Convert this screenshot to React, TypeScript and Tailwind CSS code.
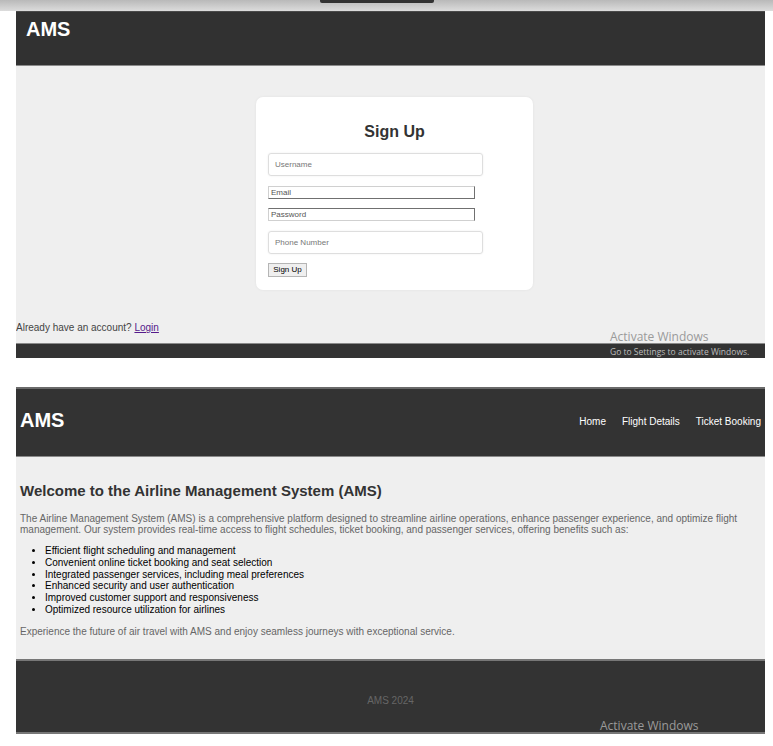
import React from 'react'

const features = [
  'Efficient flight scheduling and management',
  'Convenient online ticket booking and seat selection',
  'Integrated passenger services, including meal preferences',
  'Enhanced security and user authentication',
  'Improved customer support and responsiveness',
  'Optimized resource utilization for airlines',
]

const ActivateWindows = ({ withHint }: { withHint?: boolean }) => (
  <div className="pointer-events-none font-['Open_Sans',sans-serif] leading-none">
    <p className="text-[12px] text-[#9a9a9a]">Activate Windows</p>
    {withHint && <p className="mt-[5px] text-[8.5px] text-[#bdbdbd]">Go to Settings to activate Windows.</p>}
  </div>
)

const SignUpShot = () => (
  <div className="relative ml-[16px] mr-[8px] overflow-hidden">
    <header className="h-[54px] bg-[#313131] border-t border-[#4a4a4a] px-[10px] pt-[6px]">
      <h1 className="text-[20px] font-bold leading-[22px] text-white">AMS</h1>
    </header>
    <div className="h-[278px] bg-[#efefef] border-t border-[#8a8a8a] pt-[31px]">
      <div className="ml-[240px] w-[277px] h-[193px] rounded-[7px] bg-white px-[12px] pt-[26px] shadow-[0_0_3px_rgba(0,0,0,0.06)]">
        <h2 className="text-center text-[16px] font-bold leading-[18px] text-[#333]">Sign Up</h2>
        <form className="mt-[12px] flex flex-col items-start text-[8px]">
          <input
            placeholder="Username"
            className="h-[23px] w-[215px] rounded-[3px] border border-[#dedede] px-[6px] shadow-[0_0_2px_rgba(0,0,0,0.08)] placeholder:text-[#777]"
          />
          <input
            placeholder="Email"
            className="mt-[10px] h-[13px] w-[207px] border border-t-[#d0d0d0] border-l-[#d0d0d0] border-b-[#707070] border-r-[#707070] px-[2px] placeholder:text-[#555]"
          />
          <input
            placeholder="Password"
            className="mt-[9px] h-[13px] w-[207px] border border-t-[#707070] border-l-[#d0d0d0] border-b-[#d0d0d0] border-r-[#707070] px-[2px] placeholder:text-[#555]"
          />
          <input
            placeholder="Phone Number"
            className="mt-[10px] h-[23px] w-[215px] rounded-[3px] border border-[#dedede] px-[6px] shadow-[0_0_2px_rgba(0,0,0,0.08)] placeholder:text-[#777]"
          />
          <button
            type="button"
            className="mt-[9px] h-[14px] w-[39px] border border-[#b5b5b5] bg-[#efefef] text-[8px] leading-none text-black"
          >
            Sign Up
          </button>
        </form>
      </div>
      <p className="mt-[32px] text-[10px] leading-[12px] text-[#444]">
        Already have an account?{' '}
        <a href="#" className="text-[#551a8b] underline">
          Login
        </a>
      </p>
    </div>
    <footer className="h-[15px] bg-[#333] border-t border-[#8a8a8a]" />
    <div className="absolute left-[594px] top-[320px]">
      <ActivateWindows withHint />
    </div>
  </div>
)

const HomeShot = () => (
  <div className="relative ml-[16px] mr-[8px]">
    <header className="flex h-[69px] items-center justify-between bg-[#333] border-t-2 border-[#6a6a6a] px-[4px] pb-[5px]">
      <h1 className="text-[20px] font-bold leading-none text-white">AMS</h1>
      <nav className="flex gap-[16px] pt-[2px] text-[10px] text-white">
        <a href="#">Home</a>
        <a href="#">Flight Details</a>
        <a href="#">Ticket Booking</a>
      </nav>
    </header>
    <main className="h-[203px] bg-[#efefef] border-t border-[#8a8a8a] px-[4px] pt-[25px]">
      <h2 className="text-[15px] font-bold leading-[17px] text-[#333]">
        Welcome to the Airline Management System (AMS)
      </h2>
      <p className="mt-[14px] pr-[20px] text-[10px] leading-[11px] text-[#666]">
        The Airline Management System (AMS) is a comprehensive platform designed to streamline airline operations,
        enhance passenger experience, and optimize flight management. Our system provides real-time access to flight
        schedules, ticket booking, and passenger services, offering benefits such as:
      </p>
      <ul className="mt-[10px] list-disc pl-[25px] text-[10px] leading-[11.8px] text-black">
        {features.map((f) => (
          <li key={f}>{f}</li>
        ))}
      </ul>
      <p className="mt-[10px] text-[10px] leading-[11px] text-[#666]">
        Experience the future of air travel with AMS and enjoy seamless journeys with exceptional service.
      </p>
    </main>
    <footer className="flex h-[75px] items-center justify-center bg-[#333] border-t-2 border-[#777] border-b-2 border-b-[#777]">
      <p className="pt-[7px] text-[10px] text-[#666]">AMS 2024</p>
    </footer>
    <div className="absolute left-[584px] top-[333px]">
      <ActivateWindows />
    </div>
  </div>
)

const App = () => {
  return (
    <div className="relative h-[746px] w-[773px] overflow-hidden bg-white font-['Liberation_Sans',Arial,sans-serif]">
      <div className="h-[11px] bg-gradient-to-b from-[#b9b9b9] to-[#dcdcdc]" />
      <div className="absolute left-[320px] top-0 h-[3px] w-[114px] rounded-b-[2px] bg-[#333]" />
      <SignUpShot />
      <div className="h-[29px]" />
      <HomeShot />
    </div>
  )
}

export default App
